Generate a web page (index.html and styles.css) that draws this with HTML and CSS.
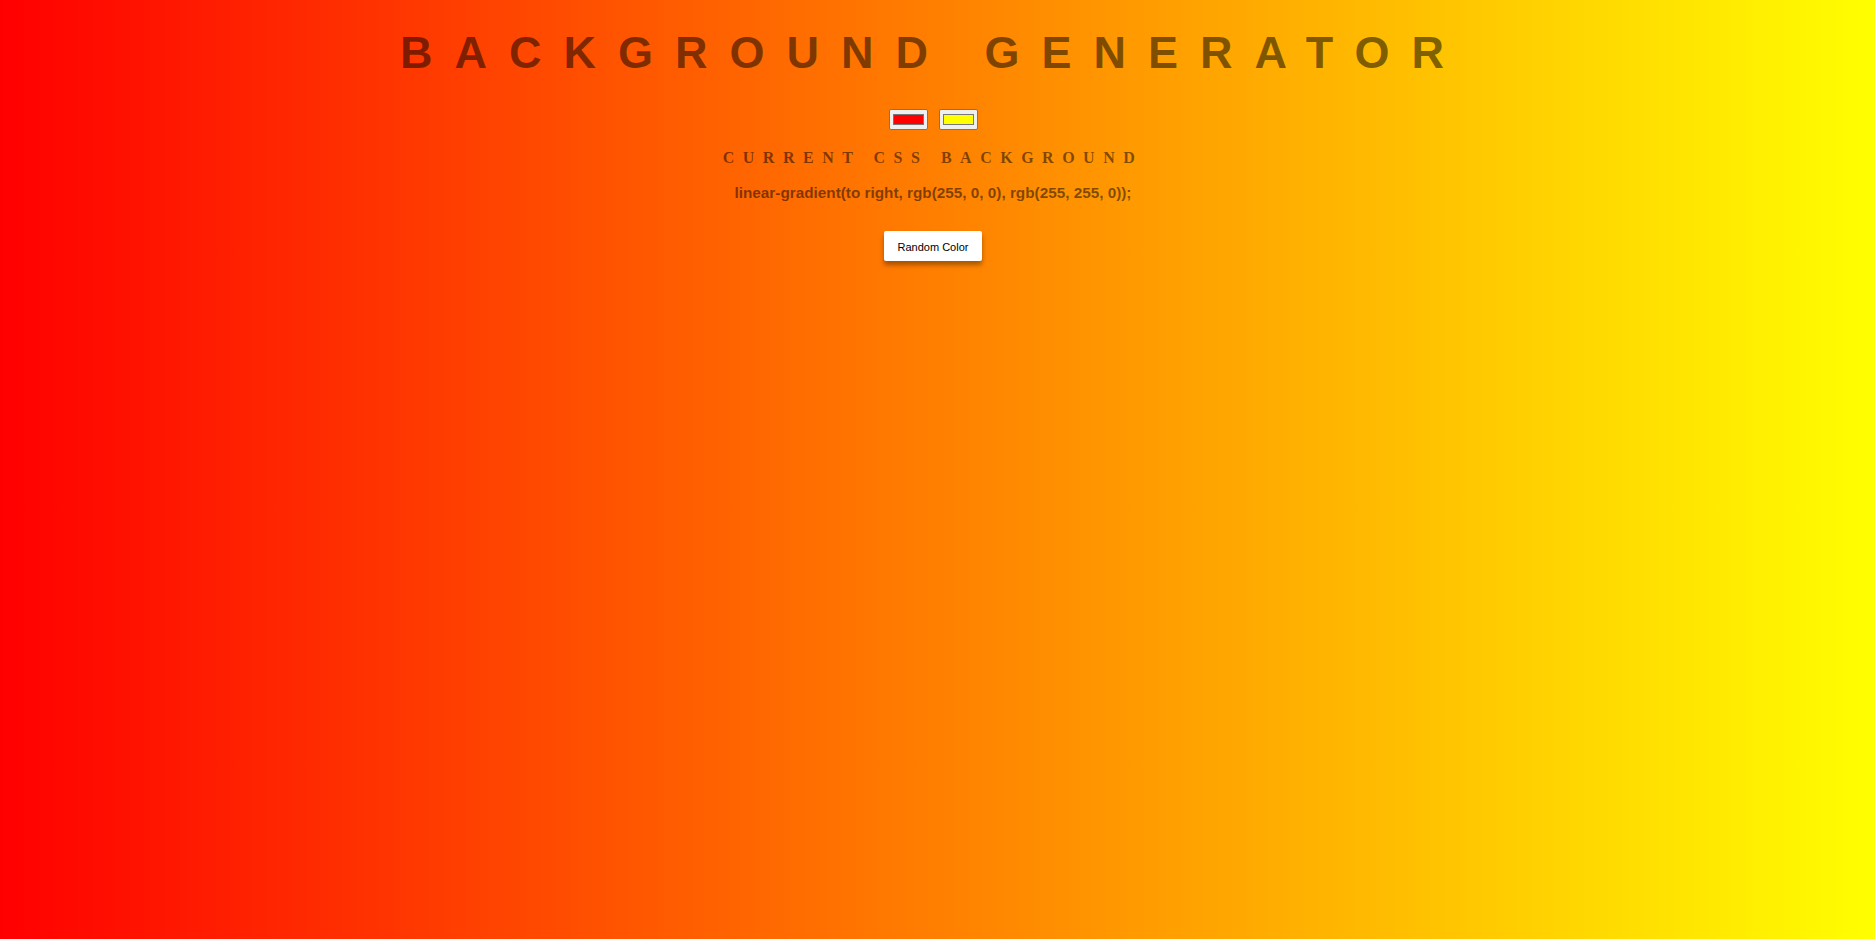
FILE: index.html
```html
<!DOCTYPE html>
<html lang="en">
<head>
<meta charset="utf-8">
<title>Background Generator</title>
<link rel="stylesheet" href="styles.css">
</head>
<body>
<main class="page">
  <h1 class="title">Background Generator</h1>
  <div class="pickers">
    <input class="color" type="color" name="color1" value="#ff0000">
    <input class="color" type="color" name="color2" value="#ffff00">
  </div>
  <h2 class="subtitle">Current CSS Background</h2>
  <p class="code">linear-gradient(to right, rgb(255, 0, 0), rgb(255, 255, 0));</p>
  <button class="random" type="button">Random Color</button>
</main>
</body>
</html>
```
FILE: styles.css
```css
html {
  min-height: 100%;
  background: linear-gradient(to right, rgb(255, 0, 0), rgb(255, 255, 0));
}

body {
  margin: 0;
  min-height: 939px;
  background: linear-gradient(to right, rgb(255, 0, 0), rgb(255, 255, 0));
  color: rgba(0, 0, 0, 0.5);
  font-family: "Liberation Sans", Arial, sans-serif;
}

.page {
  display: flex;
  flex-direction: column;
  align-items: center;
  padding: 27px 17px 0 8px;
  text-align: center;
}

.title {
  margin: 0;
  font: 700 45px/52px "Liberation Sans", Arial, sans-serif;
  letter-spacing: 22px;
  text-transform: uppercase;
}

.pickers {
  display: flex;
  gap: 11px;
  margin-top: 30px;
  height: 21px;
}

.color {
  -webkit-appearance: none;
  appearance: none;
  box-sizing: border-box;
  width: 39px;
  height: 21px;
  margin: 0;
  padding: 0;
  border: 1px solid #767676;
  border-radius: 2px;
  background: #efefef;
  cursor: pointer;
}

.color::-webkit-color-swatch-wrapper {
  padding: 4px 3px;
}

.color::-webkit-color-swatch {
  border: 1px solid #777777;
  border-radius: 0;
}

.subtitle {
  margin: 19px 0 0;
  font: 700 16px/18px "Liberation Serif", "Times New Roman", serif;
  letter-spacing: 8.5px;
  text-transform: uppercase;
}

.code {
  margin: 17px 0 0;
  font: 700 15.3px/18px "Liberation Sans", Arial, sans-serif;
}

.random {
  margin-top: 28.5px;
  box-sizing: border-box;
  height: 30px;
  padding: 2px 13.5px 0;
  border: none;
  border-radius: 2px;
  background: #ffffff;
  color: #000000;
  font: 400 11px "Liberation Sans", Arial, sans-serif;
  box-shadow: 0 4px 5px rgba(0, 0, 0, 0.35);
  cursor: pointer;
}
```
